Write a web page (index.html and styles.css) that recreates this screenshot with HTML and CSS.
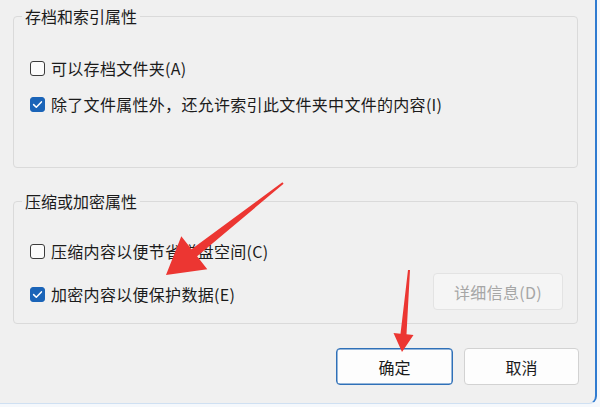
FILE: index.html
```html
<!DOCTYPE html>
<html lang="zh-CN">
<head>
<meta charset="utf-8">
<title>高级属性</title>
<link rel="stylesheet" href="styles.css">
</head>
<body>
<div class="dialog">
  <div class="content">
    <fieldset class="group g1">
      <legend>存档和索引属性</legend>
      <label class="check"><span class="box"></span><span class="lbl">可以存档文件夹(A)</span></label>
      <label class="check"><span class="box on"><svg width="15" height="15" viewBox="0 0 15 15"><polyline points="3.6,7.6 6.3,10.2 11.4,4.9" fill="none" stroke="#fff" stroke-width="1.5" stroke-linecap="round" stroke-linejoin="round"/></svg></span><span class="lbl">除了文件属性外，还允许索引此文件夹中文件的内容(I)</span></label>
    </fieldset>
    <fieldset class="group g2">
      <legend>压缩或加密属性</legend>
      <label class="check"><span class="box"></span><span class="lbl">压缩内容以便节省磁盘空间(C)</span></label>
      <div class="row">
        <label class="check"><span class="box on"><svg width="15" height="15" viewBox="0 0 15 15"><polyline points="3.6,7.6 6.3,10.2 11.4,4.9" fill="none" stroke="#fff" stroke-width="1.5" stroke-linecap="round" stroke-linejoin="round"/></svg></span><span class="lbl">加密内容以便保护数据(E)</span></label>
        <button class="btn details" disabled>详细信息(D)</button>
      </div>
    </fieldset>
    <div class="footer">
      <button class="btn ok">确定</button>
      <button class="btn cancel">取消</button>
    </div>
  </div>
</div>
<svg class="arrows" width="600" height="407" viewBox="0 0 600 407">
  <polygon fill="#ec3632" points="282.4,182.2 191.5,249.3 181.3,236.3 166,275 207.3,269.3 197.1,256.3 283.6,183.8"/>
  <polygon fill="#ec3632" points="408,269.9 400.5,333.7 393.5,333.1 402,352 413.5,334.9 406.5,334.3 410,270.1"/>
</svg>
</body>
</html>
```

FILE: styles.css
```css
html {
  background: #f5f8fc;
}
body {
  margin: 0;
  width: 600px;
  height: 407px;
  overflow: hidden;
  position: relative;
  font-family: "Noto Sans CJK SC", "Noto Sans", sans-serif;
  font-size: 16px;
  color: #1b1b1b;
}
.dialog {
  width: 595px;
  height: 403px;
  background: #f0f0f0;
  border-right: 2px solid #2f7bd0;
  border-bottom: 1px solid #cfe0f2;
  border-bottom-right-radius: 8px;
}
.content {
  padding: 6px 17px 0 13px;
}
.group {
  margin: 0;
  min-width: 0;
  border: 1px solid #dadada;
  border-radius: 4px;
  padding: 0 14px 13px 16px;
}
.group legend {
  margin-left: -8px;
  padding: 0 3px;
  line-height: 20px;
  color: #1b1b1b;
}
.g1 {
  padding-top: 30px;
  padding-bottom: 51px;
  margin-bottom: 23px;
}
.g2 {
  padding-top: 28px;
  padding-bottom: 13px;
}
.check {
  display: flex;
  align-items: center;
  height: 24px;
  line-height: 24px;
}
.lbl {
  letter-spacing: 0.3px;
}
.check + .check {
  margin-top: 12px;
}
.box {
  width: 13px;
  height: 13px;
  border: 1px solid #3b3b3b;
  border-radius: 3px;
  background: #fbfbfb;
  margin-right: 6px;
  flex: none;
  position: relative;
}
.box.on {
  background: #1a64b8;
  border-color: #1a64b8;
}
.box svg {
  position: absolute;
  left: -1px;
  top: -1px;
}
.row {
  display: flex;
  align-items: center;
  margin-top: 10px;
  height: 37px;
}
.row .check {
  margin-top: 5px;
}
.btn {
  font-family: "Noto Sans CJK SC", "Noto Sans", sans-serif;
  font-size: 16px;
  height: 37px;
  border-radius: 4px;
  border: 1px solid #d2d2d2;
  background: #fdfdfd;
  color: #1b1b1b;
  padding: 0;
}
.details {
  margin-left: auto;
  width: 130px;
  background: #f5f5f5;
  border-color: #e3e3e3;
  color: #a6a6a6;
  letter-spacing: 0.3px;
}
.footer {
  display: flex;
  justify-content: flex-end;
  gap: 11px;
  margin-top: 24px;
  margin-right: -1px;
}
.ok {
  width: 117px;
  border-color: #2f70b8;
  box-shadow: inset 0 0 0 0.5px #2f70b8;
}
.cancel {
  width: 115px;
}
.arrows {
  position: absolute;
  left: 0;
  top: 0;
  pointer-events: none;
}
```
